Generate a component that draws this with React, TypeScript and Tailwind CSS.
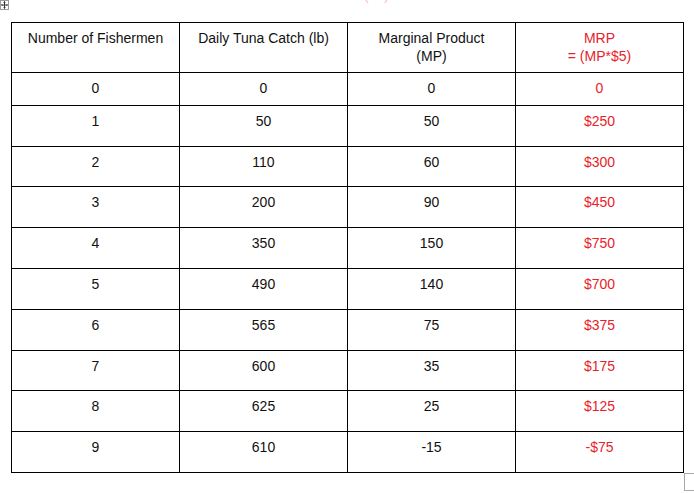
const rows = [
  { n: "0", catch: "0", mp: "0", mrp: "0", h: "h-[33px]" },
  { n: "1", catch: "50", mp: "50", mrp: "$250", h: "h-[41px]" },
  { n: "2", catch: "110", mp: "60", mrp: "$300", h: "h-[40px]" },
  { n: "3", catch: "200", mp: "90", mrp: "$450", h: "h-[41px]" },
  { n: "4", catch: "350", mp: "150", mrp: "$750", h: "h-[41px]" },
  { n: "5", catch: "490", mp: "140", mrp: "$700", h: "h-[41px]" },
  { n: "6", catch: "565", mp: "75", mrp: "$375", h: "h-[41px]" },
  { n: "7", catch: "600", mp: "35", mrp: "$175", h: "h-[40px]" },
  { n: "8", catch: "625", mp: "25", mrp: "$125", h: "h-[41px]" },
  { n: "9", catch: "610", mp: "-15", mrp: "-$75", h: "h-[41px]" },
];

const cell = "border-r border-b border-black text-center pt-[6px] leading-[18px]";

const App = () => {
  return (
    <div
      className="relative w-[694px] h-[493px] bg-white overflow-hidden text-[14px] text-[#111]"
      style={{ fontFamily: '"Liberation Sans", Arial, sans-serif' }}
    >
      {/* table move handle */}
      <div className="absolute left-0 top-0 w-[9px] h-[10px] border border-[#9a9a9a] bg-white">
        <svg width="7" height="8" viewBox="0 0 7 8" className="block">
          <path d="M3.5 0.5 V7.5 M0.5 4 H6.5" stroke="#333" strokeWidth="1" fill="none" />
          <path d="M2.5 1.5 L3.5 0.5 L4.5 1.5 M2.5 6.5 L3.5 7.5 L4.5 6.5 M1.5 3 L0.5 4 L1.5 5 M5.5 3 L6.5 4 L5.5 5" stroke="#333" strokeWidth="0.8" fill="none" />
        </svg>
      </div>

      {/* heading cut off by the page top */}
      <div className="absolute left-[364px] top-[-15px] text-[14px] text-[#e8222a] opacity-30">( b )</div>

      <div className="pl-[11px] pt-[22px]">
        <div className="grid grid-cols-[168px_168px_168px_168px] w-[673px] border-l border-t border-black">
          <div className={`${cell} h-[50px]`}>Number of Fishermen</div>
          <div className={`${cell} h-[50px]`}>Daily Tuna Catch (lb)</div>
          <div className={`${cell} h-[50px]`}>
            Marginal Product
            <br />
            (MP)
          </div>
          <div className={`${cell} h-[50px] text-[#e8222a]`}>
            MRP
            <br />= (MP*$5)
          </div>

          {rows.map((r) => (
            <div key={r.n} className="contents">
              <div className={`${cell} ${r.h}`}>{r.n}</div>
              <div className={`${cell} ${r.h}`}>{r.catch}</div>
              <div className={`${cell} ${r.h}`}>{r.mp}</div>
              <div className={`${cell} ${r.h} text-[#e8222a]`}>{r.mrp}</div>
            </div>
          ))}
        </div>
      </div>

      {/* resize handle */}
      <div className="absolute left-[684px] top-[473px] w-[14px] h-[18px] border border-[#a8a8a8] bg-white" />
    </div>
  );
};

export default App;
